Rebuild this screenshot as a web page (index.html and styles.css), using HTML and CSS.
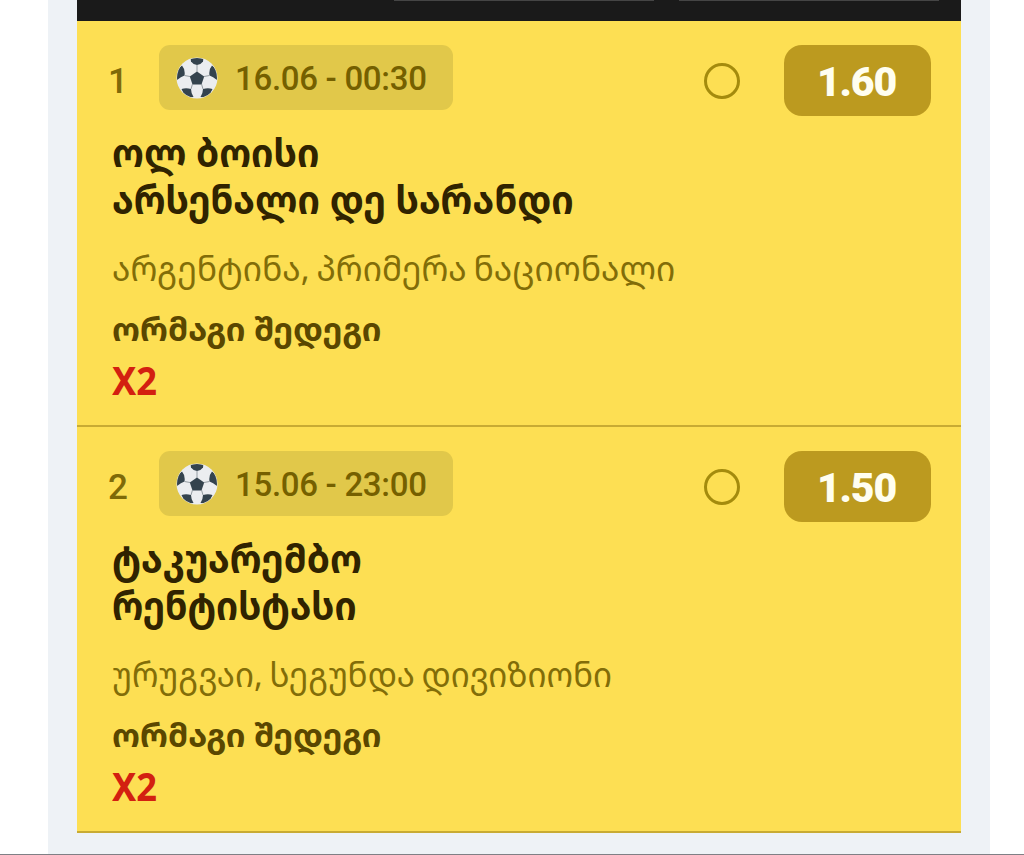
FILE: index.html
```html
<!DOCTYPE html>
<html lang="ka">
<head>
<meta charset="utf-8">
<title>ბილეთი</title>
<link rel="stylesheet" href="styles.css">
</head>
<body>
<svg class="defs" aria-hidden="true">
  <defs>
    <clipPath id="ball-clip"><circle cx="21" cy="21" r="20"/></clipPath>
    <symbol id="ball" viewBox="0 0 42 42">
      <circle cx="21" cy="21" r="20.5" fill="#ebedf0"/>
      <g clip-path="url(#ball-clip)" fill="#34434e">
        <path d="M21 14.5L28.2 19.5L25.5 27.5H16.5L13.8 19.5Z"/>
        <path d="M14.500 0H27.500L27 4.500Q25 7.500 21 8Q17 7.500 15 4.500Z"/>
        <path d="M6 8.500Q9.500 12.500 8.500 18.500Q5 19.500 1 23L-1 14ZM36 8.500Q32.500 12.500 33.500 18.500Q37 19.500 41 23L43 14Z"/>
        <path d="M5.500 32Q10 30.500 15 32Q15 36 17.500 40L10 41ZM36.500 32Q32 30.500 27 32Q27 36 24.500 40L32 41Z"/>
      </g>
      <path d="M21 8V15M8.500 18.500L14 19.500M33.500 18.500L28 19.500M16.500 27L15 32M25.500 27L27 32" stroke="#8a939a" stroke-width=".9" fill="none"/>
    </symbol>
  </defs>
</svg>
<div class="page">
  <main class="ticket">
    <header class="toolbar"><span class="field"></span><span class="field"></span></header>
    <article class="bet">
      <div class="head">
        <span class="index">1</span>
        <span class="date"><svg class="ball"><use href="#ball"/></svg><span class="time">16.06 - 00:30</span></span>
        <span class="status"></span>
        <span class="odds">1.60</span>
      </div>
      <div class="team"><span>ოლ ბოისი</span></div>
      <div class="team"><span>არსენალი დე სარანდი</span></div>
      <div class="league"><span>არგენტინა, პრიმერა ნაციონალი</span></div>
      <div class="market"><span>ორმაგი შედეგი</span></div>
      <div class="pick"><span>X2</span></div>
    </article>
    <article class="bet">
      <div class="head">
        <span class="index">2</span>
        <span class="date"><svg class="ball"><use href="#ball"/></svg><span class="time">15.06 - 23:00</span></span>
        <span class="status"></span>
        <span class="odds">1.50</span>
      </div>
      <div class="team"><span>ტაკუარემბო</span></div>
      <div class="team tight"><span>რენტისტასი</span></div>
      <div class="league tight"><span>ურუგვაი, სეგუნდა დივიზიონი</span></div>
      <div class="market"><span>ორმაგი შედეგი</span></div>
      <div class="pick"><span>X2</span></div>
    </article>
  </main>
</div>
</body>
</html>
```
FILE: styles.css
```css
* { box-sizing: border-box; }
body { margin: 0; background: #fff; font-family: "Noto Sans", "Noto Sans Georgian", "DejaVu Sans", sans-serif; }
.defs { position: absolute; width: 0; height: 0; }
.page { height: 855px; padding: 0 34px 0 48px; border-bottom: 1px solid #7f8085; overflow: hidden; }
.ticket { height: 854px; padding: 0 29px; background: #eef2f6; }
.toolbar { display: flex; gap: 25px; height: 21px; padding-left: 317px; background: #1a1a1a; }
.field { width: 260px; height: 1px; background: #454545; }
.bet { height: 406px; padding: 24px 30px 0 35px; background: #fddf53; border-bottom: 2px solid #c8ab33; }
.head { display: flex; height: 71px; }
.index { width: 46px; margin-left: -4px; padding-top: 14px; font: 500 35px/46px Roboto, sans-serif; color: #7f6a08; }
.date { display: flex; align-items: center; width: 294px; height: 65px; margin-left: 5px; padding-left: 17px; gap: 17px; border-radius: 11px; background: #e1c84a; }
.ball { width: 42px; height: 42px; }
.time { padding-top: 2px; font: 500 33px/40px Roboto, sans-serif; letter-spacing: -.3px; color: #756000; white-space: nowrap; }
.status { width: 36px; height: 36px; margin: 18px 44px 0 auto; border: 3px solid #a48b0d; border-radius: 50%; }
.odds { width: 147px; height: 71px; border-radius: 18px; background: #bc9a1f; color: #fffef0; font: 900 41px/74px Roboto, sans-serif; letter-spacing: -1.2px; text-indent: -2px; text-align: center; }
.team, .league, .market { white-space: nowrap; }
.team span, .league span, .market span, .pick span { display: inline-block; transform-origin: 0 50%; }
.team { height: 47px; font-size: 39px; line-height: 47px; font-weight: 700; color: #302300; }
.team span { transform: scaleX(.952); }
.team.tight span { transform: scaleX(.938); }
.head + .team { margin-top: 12px; }
.league { height: 40px; margin-top: 26px; font-size: 34px; line-height: 40px; word-spacing: -2px; color: #826d08; }
.league span { transform: scaleX(.987); }
.league.tight span { transform: scaleX(.973); }
.market { height: 40px; margin-top: 21px; font-size: 33px; line-height: 40px; font-weight: 700; color: #5a4700; }
.market span { transform: scaleX(.987); }
.pick { height: 50px; margin-top: 6px; font-size: 39px; line-height: 50px; font-weight: 700; color: #d32010; }
.pick span { transform: scaleX(.93); }
```
